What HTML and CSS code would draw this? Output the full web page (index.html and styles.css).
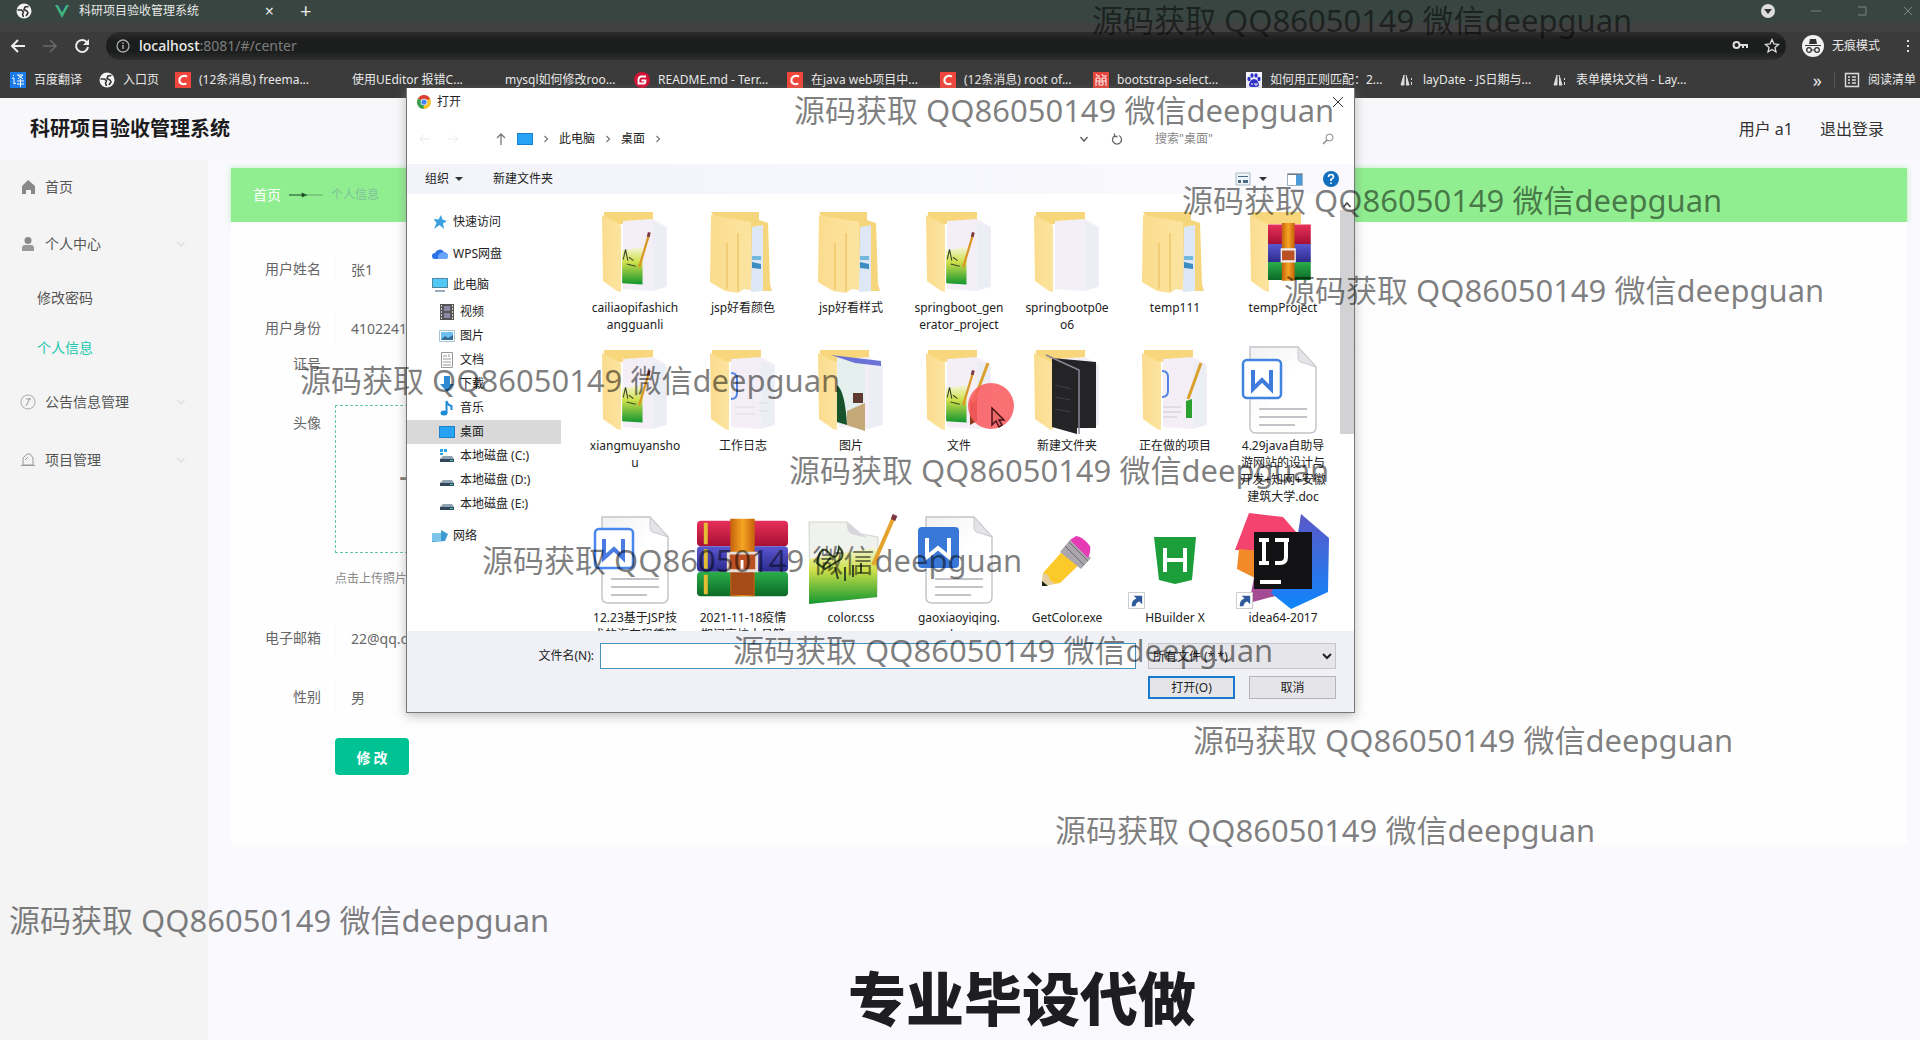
FILE: index.html
```html
<!DOCTYPE html>
<html lang="zh-CN">
<head>
<meta charset="utf-8">
<title>科研项目验收管理系统</title>
<link rel="stylesheet" href="styles.css">
</head>
<body>
<svg class="defs" aria-hidden="true">
  <defs>
    <linearGradient id="gold" x1="0" x2="1"><stop offset="0" stop-color="#fbdc8e"/><stop offset="1" stop-color="#fbe4a0"/></linearGradient>
    <linearGradient id="grass" x1="0" y1="0" x2="0" y2="1"><stop offset="0" stop-color="#f4f6d8"/><stop offset=".4" stop-color="#cfe04a"/><stop offset="1" stop-color="#12962f"/></linearGradient>
    <linearGradient id="page" x1="0" y1="0" x2="1" y2="1"><stop offset="0" stop-color="#f1f1f3"/><stop offset=".5" stop-color="#fff"/></linearGradient>
    <linearGradient id="strap" x1="0" x2="1"><stop offset="0" stop-color="#c4610c"/><stop offset=".5" stop-color="#f6a524"/><stop offset="1" stop-color="#c4610c"/></linearGradient>
    <linearGradient id="red" x1="0" y1="0" x2="0" y2="1"><stop offset="0" stop-color="#e8305a"/><stop offset="1" stop-color="#a80f34"/></linearGradient>
    <linearGradient id="blue" x1="0" y1="0" x2="0" y2="1"><stop offset="0" stop-color="#5a58d0"/><stop offset="1" stop-color="#2c2a8c"/></linearGradient>
    <linearGradient id="green" x1="0" y1="0" x2="0" y2="1"><stop offset="0" stop-color="#2cae4c"/><stop offset="1" stop-color="#0b6a26"/></linearGradient>
    <linearGradient id="ijblue" x1="0" y1="0" x2="0" y2="1"><stop offset="0" stop-color="#5b57c8"/><stop offset="1" stop-color="#0f86fb"/></linearGradient>
    <symbol id="globe" viewBox="0 0 16 16"><circle cx="8" cy="8" r="7.500" fill="#f4f4f4"/><path d="M1.500 7h4l2 2-1 2 1 3M12.500 3.500L9 4 8 6.500l3 1.500 1 2-2 3" fill="none" stroke="#333" stroke-width="1.600"/></symbol>
    <symbol id="csdn" viewBox="0 0 16 16"><path d="M0 0h16v16H0z" fill="#f1463b"/><path d="M12 4.600C9 3 4.800 4 4.400 8c-.3 4 4 5 7 3.400" fill="none" stroke="#fff" stroke-width="2"/></symbol>
    <symbol id="lay" viewBox="0 0 16 16"><path d="M5 3v10H2zM7 3l3 10H7M12.500 6v2M12.500 10v3" fill="#ddd" stroke="#ddd"/></symbol>
    <symbol id="folder-open" viewBox="0 0 96 96"><path d="M17 9h49v12H17z" fill="#f7d67c"/><path d="M36 18l30-2 14 8v60l-16 4-28-2z" fill="#f4eff7"/><path d="M66 20v68l13-5V24z" fill="#eceef6"/></symbol>
    <symbol id="flap" viewBox="0 0 96 96"><path d="M15 12l19 10v67l-4-1-14-10z" fill="url(#gold)"/></symbol>
    <symbol id="folder-shut" viewBox="0 0 96 96"><path d="M16 9h48v8l9 3 2 61 2 7H62z" fill="#f5d67c"/><path d="M57 24l11-2v66l-12 1z" fill="#dde7f5"/><path d="M57 53h9v4h-9z" fill="#74b9dd"/><path d="M57 59l9 2v5l-9-1z" fill="#3d8dc1"/><path d="M16 12l40 7v68l-7-1-6 4-13-2-15-9z" fill="url(#gold)"/><path d="M32 40v46M43 30v58" stroke="#f3cd76" stroke-width="2"/></symbol>
    <symbol id="art" viewBox="0 0 30 48"><path d="M1 16l18-3v33L1 45z" fill="url(#grass)"/><path d="M2 24l2-9 2 10M5 28l8 2M7 22l4 3" stroke="#3c4b26" fill="none"/><path d="M25 1l-9 30" stroke="#d99727" stroke-width="2"/><path d="M25 0l-1 4" stroke="#7b3a44" stroke-width="2.500"/></symbol>
    <symbol id="doc" viewBox="0 0 96 96"><path d="M15 6h48l18 20v60q0 6-6 6H21q-6 0-6-6z" fill="url(#page)" stroke="#c3c3c8" stroke-width="1.400"/><path d="M63 6v10q0 6 6 6l12 4z" fill="#e3e3e8" stroke="#c9c9ce"/><path d="M24 68h48M24 76h48M24 84h36" stroke="#c5c3ca" stroke-width="2"/></symbol>
    <symbol id="books" viewBox="0 0 96 80"><rect x="1" y="2" width="93" height="26" rx="4" fill="url(#red)"/><rect x="1" y="28" width="93" height="26" rx="4" fill="url(#blue)"/><rect x="1" y="54" width="93" height="25" rx="4" fill="url(#green)"/><path d="M10 4v22M10 31v20M10 57v20" stroke="#e4bd34" stroke-width="4"/><path d="M35 0h25v79H35z" fill="url(#strap)"/><path d="M36 53h23v25H36z" fill="#a44b17"/><path d="M33 35h29v18H33z" fill="#b95124" stroke="#e9dfd8" stroke-width="3"/><path d="M47 42v9" stroke="#fff" stroke-width="3"/></symbol>
    <symbol id="shortcut" viewBox="0 0 18 18"><path d="M.5.5h17v17H.5z" fill="#fff" stroke="#c9c9c9"/><path d="M4 15c0-5 2-7 5-8L6 4h9v9l-3-3c-3 1-4 3-4 5z" fill="#2f5a9c"/></symbol>
    <symbol id="disk" viewBox="0 0 16 16"><path d="M1 11l3-3h9l2 3z" fill="#8fa3b5"/><path d="M1 11h14v3H1z" fill="#34465c"/><path d="M11 12h3v1h-3z" fill="#3fd0a5"/></symbol>
    <symbol id="screen" viewBox="0 0 16 16"><path d="M0 2h16v12H0z" fill="#1b80d0"/><path d="M1 3h14v10H1z" fill="#27a3f5"/></symbol>
    <symbol id="chev" viewBox="0 0 10 10"><path d="M3.500 2l3 3-3 3" fill="none" stroke="#777" stroke-width="1.200"/></symbol>
    <symbol id="down" viewBox="0 0 10 10"><path d="M1.500 3L5 7l3.500-4" fill="none" stroke="currentColor" stroke-width="1.500"/></symbol>
  </defs>
</svg>

<header class="browser">
  <div class="tabs">
    <svg class="i16"><use href="#globe"/></svg>
    <div class="tab">
      <svg class="i16" viewBox="0 0 16 16"><path d="M1 2h3l4 7 4-7h3L8 15z" fill="#3fb27f"/><path d="M4 2h3l1 2 1-2h3L8 9z" fill="#2f4858"/></svg>
      <span class="tab-title">科研项目验收管理系统</span>
      <button class="bare" aria-label="关闭标签页">×</button>
    </div>
    <button class="bare plus" aria-label="新标签页">+</button>
    <div class="window-buttons">
      <svg class="i16" viewBox="0 0 16 16"><circle cx="8" cy="8" r="7" fill="#ddd"/><path d="M4 6h8l-4 5z" fill="#333"/></svg>
      <button class="bare" aria-label="最小化"><svg class="i12" viewBox="0 0 12 12"><path d="M1 6h10" stroke="#788"/></svg></button>
      <button class="bare" aria-label="还原"><svg class="i12" viewBox="0 0 12 12"><path d="M2 2h8v8H2" fill="none" stroke="#788"/></svg></button>
      <button class="bare" aria-label="关闭"><svg class="i12" viewBox="0 0 12 12"><path d="M2 2l8 8M10 2l-8 8" stroke="#788"/></svg></button>
    </div>
  </div>
  <div class="toolbar">
    <button class="bare" aria-label="后退"><svg class="i16" viewBox="0 0 16 16"><path d="M15 8H2M8 2L2 8l6 6" fill="none" stroke="#eee" stroke-width="2"/></svg></button>
    <button class="bare" aria-label="前进"><svg class="i16" viewBox="0 0 16 16"><path d="M1 8h13M8 2l6 6-6 6" fill="none" stroke="#6a6a6a" stroke-width="1.500"/></svg></button>
    <button class="bare" aria-label="刷新"><svg class="i16" viewBox="0 0 16 16"><path d="M13 4.500A6 6 0 1 0 14 9" fill="none" stroke="#eee" stroke-width="2"/><path d="M15 1v6H9z" fill="#eee"/></svg></button>
    <div class="address">
      <svg class="i16" viewBox="0 0 16 16"><circle cx="8" cy="8" r="6" fill="none" stroke="#aaa" stroke-width="1.300"/><path d="M8 7v4M8 4.500V6" stroke="#aaa" stroke-width="1.500"/></svg>
      <span class="url"><b>localhost</b>:8081/#/center</span>
      <svg class="i16 push" viewBox="0 0 16 16"><circle cx="4.500" cy="7" r="3" fill="none" stroke="#ddd" stroke-width="2"/><path d="M7 7h8v3M11 7v3" fill="none" stroke="#ddd" stroke-width="2"/></svg>
      <svg class="i16" viewBox="0 0 16 16"><path d="M8 1.500l2 4.500 4.500.4L11 9.500l1 4.500-4-2.500L4 14l1-4.500L1.500 6.400 6 6z" fill="none" stroke="#ddd" stroke-width="1.300"/></svg>
    </div>
    <div class="incognito">
      <svg class="i22" viewBox="0 0 22 22"><circle cx="11" cy="11" r="11" fill="#f2f2f2"/><path d="M7 9l1-5h6l1 5zM3 10h16v1H3z" fill="#333"/><path d="M9 15h4" stroke="#333"/><circle cx="7" cy="15" r="2.300" fill="none" stroke="#333" stroke-width="1.300"/><circle cx="15" cy="15" r="2.300" fill="none" stroke="#333" stroke-width="1.300"/></svg>
      <span>无痕模式</span>
    </div>
    <button class="bare" aria-label="菜单"><svg class="i16" viewBox="0 0 16 16"><path d="M7 2h2v2H7zM7 7h2v2H7zM7 12h2v2H7z" fill="#ddd"/></svg></button>
  </div>
  <nav class="bookmarks">
    <a href="#" class="short"><svg class="i16" viewBox="0 0 16 16"><path d="M0 0h16v16H0z" fill="#1b7be8"/><path d="M3 3l1 1M2 6h2v6l2-1M7 3h6l-5 4M8 3l5 4M7 9h7M7 12h7M10.500 7v8" stroke="#fff" fill="none"/></svg><span>百度翻译</span></a>
    <a href="#" class="shorter"><svg class="i16"><use href="#globe"/></svg><span>入口页</span></a>
    <a href="#"><svg class="i16"><use href="#csdn"/></svg><span>(12条消息) freema...</span></a>
    <a href="#"><svg class="i16"></svg><span>使用UEditor 报错C...</span></a>
    <a href="#"><svg class="i16"></svg><span>mysql如何修改roo...</span></a>
    <a href="#"><svg class="i16" viewBox="0 0 16 16"><circle cx="8" cy="8" r="8" fill="#d21436"/><path d="M12 4.500H7Q4.500 5 4.500 8v3.500h5.500q1.500 0 1.500-3H7.500" fill="none" stroke="#fff" stroke-width="1.800"/></svg><span>README.md - Terr...</span></a>
    <a href="#"><svg class="i16"><use href="#csdn"/></svg><span>在java web项目中...</span></a>
    <a href="#"><svg class="i16"><use href="#csdn"/></svg><span>(12条消息) root of...</span></a>
    <a href="#"><svg class="i16" viewBox="0 0 16 16"><path d="M0 0h16v16H0z" fill="#e5463c"/><path d="M3 2l1 2h3M9 2l1 2h4M3 14V6h4v3H3M13 14V6H9v3h4M6 10h4v3H6z" stroke="#fff" fill="none"/></svg><span>bootstrap-select...</span></a>
    <a href="#"><svg class="i16" viewBox="0 0 16 16"><path d="M0 0h16v16H0z" fill="#f4f4ff"/><g fill="#2f31c9"><ellipse cx="3" cy="7" rx="1.600" ry="2.200"/><ellipse cx="6" cy="3.500" rx="1.600" ry="2.300"/><ellipse cx="10" cy="3.500" rx="1.600" ry="2.300"/><ellipse cx="13" cy="7" rx="1.600" ry="2.200"/><path d="M8 7c3 0 5 4 5 6s-2 2-5 2-5 0-5-2 2-6 5-6z"/></g><path d="M6 11v2M9 11v2h2v-2" stroke="#fff" fill="none"/></svg><span>如何用正则匹配：2...</span></a>
    <a href="#"><svg class="i16"><use href="#lay"/></svg><span>layDate - JS日期与...</span></a>
    <a href="#"><svg class="i16"><use href="#lay"/></svg><span>表单模块文档 - Lay...</span></a>
    <button class="bare push" aria-label="更多书签">»</button>
    <a href="#" class="reading"><svg class="i16" viewBox="0 0 16 16"><path d="M1.500 1.500h13v13h-13zM4 5h2M8 5h4M4 8h2M8 8h4M4 11h2M8 11h4" fill="none" stroke="#ddd" stroke-width="1.400"/></svg><span>阅读清单</span></a>
  </nav>
</header>

<div class="app">
  <header class="app-head">
    <h1>科研项目验收管理系统</h1>
    <span class="user">用户 a1</span>
    <a href="#">退出登录</a>
  </header>
  <nav class="side">
    <a href="#" class="top"><svg class="i16" viewBox="0 0 16 16"><path d="M8 1l7 6v8h-4v-4H6v4H2V7z" fill="#888"/></svg>首页</a>
    <a href="#" class="top"><svg class="i16" viewBox="0 0 16 16"><circle cx="8" cy="4.500" r="3.500" fill="#888"/><path d="M2 15v-3q0-3 3-3h6q3 0 3 3v3z" fill="#999"/></svg>个人中心<svg class="i10 fold"><use href="#down"/></svg></a>
    <a href="#" class="sub">修改密码</a>
    <a href="#" class="sub on">个人信息</a>
    <a href="#" class="top"><svg class="i16" viewBox="0 0 16 16"><circle cx="8" cy="8" r="7" fill="none" stroke="#aaa"/><path d="M10 4l-4 8M6 5h5" stroke="#999" fill="none"/></svg>公告信息管理<svg class="i10 fold"><use href="#down"/></svg></a>
    <a href="#" class="top"><svg class="i16" viewBox="0 0 16 16"><path d="M3 13V6l4-4h3l3 4v7zM1 13.500h14M5 8l3-3" fill="none" stroke="#999"/></svg>项目管理<svg class="i10 fold"><use href="#down"/></svg></a>
  </nav>
  <main>
    <div class="crumbs"><a href="#">首页</a><svg class="line" viewBox="0 0 34 8"><path d="M0 4h34" stroke="#6aa86c"/><path d="M0 4h18M13 2v4l4-2z" stroke="#2d6b35"/></svg><span>个人信息</span></div>
    <form class="card">
      <div class="row"><label for="name">用户姓名</label><input id="name" value="张1"></div>
      <div class="row"><label for="idno">用户身份证号</label><input id="idno" value="4102241"></div>
      <div class="row"><label for="photo">头像</label><div><button id="photo" type="button" class="upload">+</button><p class="hint">点击上传照片</p></div></div>
      <div class="row"><label for="mail">电子邮箱</label><input id="mail" value="22@qq.com"></div>
      <div class="row"><label for="sex">性别</label><input id="sex" value="男"></div>
      <button type="button" class="save">修 改</button>
    </form>
  </main>
</div>

<section class="dialog" role="dialog" aria-label="打开">
  <div class="d-title">
    <svg class="i14" viewBox="0 0 16 16"><circle cx="8" cy="8" r="8" fill="#f4c52e"/><path d="M8 8L1.100 4A8 8 0 0 1 15 4z" fill="#dc4437"/><path d="M8 8L1.100 4A8 8 0 0 0 7.500 16z" fill="#35a154"/><circle cx="8" cy="8" r="3.800" fill="#fff"/><circle cx="8" cy="8" r="3" fill="#4284f3"/></svg>
    <span>打开</span>
    <button class="bare push" aria-label="关闭"><svg class="i12" viewBox="0 0 12 12"><path d="M1 1l10 10M11 1L1 11" stroke="#333"/></svg></button>
  </div>
  <div class="d-path">
    <svg class="i12" viewBox="0 0 12 12"><path d="M11 6H1l4-4M1 6l4 4" fill="none" stroke="#e8e8ec"/></svg>
    <svg class="i12" viewBox="0 0 12 12"><path d="M1 6h10L7 2m4 4l-4 4" fill="none" stroke="#ececf0"/></svg>
    <svg class="i12 up" viewBox="0 0 12 12"><path d="M6 12V1M2 5l4-4 4 4" fill="none" stroke="#777" stroke-width="1.300"/></svg>
    <svg class="i16"><use href="#screen"/></svg>
    <svg class="i10"><use href="#chev"/></svg><span>此电脑</span><svg class="i10"><use href="#chev"/></svg><span>桌面</span><svg class="i10"><use href="#chev"/></svg>
    <svg class="i10 push"><use href="#down"/></svg>
    <svg class="i12" viewBox="0 0 12 12"><path d="M8 2.500A4.500 4.500 0 1 1 4 2.500M3.500.5v3h3" fill="none" stroke="#666" stroke-width="1.300"/></svg>
    <input class="search" aria-label="搜索" placeholder='搜索"桌面"'>
    <svg class="i12" viewBox="0 0 12 12"><circle cx="7.500" cy="4.500" r="3.500" fill="none" stroke="#888"/><path d="M5 7l-4 4" stroke="#888" stroke-width="1.500"/></svg>
  </div>
  <div class="d-tools">
    <button class="bare">组织<i class="caret"></i></button>
    <button class="bare new">新建文件夹</button>
    <button class="bare push" aria-label="视图"><svg class="i16" viewBox="0 0 16 16"><path d="M1 2h14v12H1z" fill="#eef4f8" stroke="#a9b9c6"/><path d="M3 5h10v1H3zM3 9h3v3H3zM8 9h5v3H8z" fill="#496c84"/></svg><i class="caret"></i></button>
    <button class="bare" aria-label="预览窗格"><svg class="i16" viewBox="0 0 16 16"><path d="M.5 2.500h15v12H.5z" fill="#fff" stroke="#9db0c0"/><path d="M9 4h6v10H9z" fill="#4a9bdc"/><path d="M1 3h14v1H1z" fill="#778"/></svg></button>
    <button class="bare" aria-label="帮助"><svg class="i16" viewBox="0 0 16 16"><circle cx="8" cy="8" r="8" fill="#0f6ebd"/><path d="M5.500 6q0-2.500 2.500-2.500T10.500 6Q10.500 7 8 8.500V10M8 11.500v1.500" fill="none" stroke="#fff" stroke-width="1.700"/></svg></button>
  </div>
  <div class="d-body">
    <nav class="tree">
      <a href="#"><svg class="i16" viewBox="0 0 16 16"><path d="M9 1l1.500 4.500L15 7l-4 2.500 1 5.500-4.500-4L2 15l2.500-6-3-4 5 .5z" fill="#3b9fe0"/></svg>快速访问</a>
      <a href="#"><svg class="i16" viewBox="0 0 16 16"><path d="M3 13a3 3 0 0 1 0-6 5 5 0 0 1 9-1q4 1 4 4t-3 3z" fill="#2c72e6"/><path d="M6 13q-1-6 6-7 4 1 4 4t-3 3z" fill="#69a5fa"/></svg>WPS网盘</a>
      <a href="#" class="pc"><svg class="i16" viewBox="0 0 16 16"><path d="M0 1h16v10H0z" fill="#4f86a4"/><path d="M1 2h14v8H1z" fill="#54c8f5"/><path d="M3 13h10v2H3z" fill="#9ab"/></svg>此电脑</a>
      <a href="#" class="in"><svg class="i16" viewBox="0 0 16 16"><path d="M1 0h14v16H1z" fill="#555"/><path d="M5 2h6v5H5zM5 9h6v5H5z" fill="#8d8aa8"/><path d="M2.500 1v14M13.500 1v14" stroke="#ccc" stroke-dasharray="2 1"/></svg>视频</a>
      <a href="#" class="in"><svg class="i16" viewBox="0 0 16 16"><path d="M.5 2.500h15v11H.5z" fill="#fff" stroke="#a9c0cf"/><path d="M2 4h12v8H2z" fill="#70bdf0"/><path d="M2 12l4-4 3 2 5-3v5z" fill="#326b95"/></svg>图片</a>
      <a href="#" class="in"><svg class="i16" viewBox="0 0 16 16"><path d="M2.500.5h11v15h-11zM4 4h4M4 7h8M4 10h8M4 13h8M10 2v3" fill="#fff" stroke="#999"/></svg>文档</a>
      <a href="#" class="in"><svg class="i16" viewBox="0 0 16 16"><path d="M5 0h6v8h4l-7 8-7-8h4z" fill="#2e8ad2"/></svg>下载</a>
      <a href="#" class="in"><svg class="i16" viewBox="0 0 16 16"><ellipse cx="5" cy="13" rx="3.500" ry="2.500" fill="#1f8bd6"/><path d="M7.500 13V1q1 4 5 5v4" fill="none" stroke="#1f8bd6" stroke-width="2"/></svg>音乐</a>
      <a href="#" class="in on"><svg class="i16"><use href="#screen"/></svg>桌面</a>
      <a href="#" class="in"><svg class="i16" viewBox="0 0 16 16"><use href="#disk"/><path d="M1 1h3v3H1zM5 1h3v3H5zM1 5h3v2H1z" fill="#27a9e8"/></svg>本地磁盘 (C:)</a>
      <a href="#" class="in"><svg class="i16"><use href="#disk"/></svg>本地磁盘 (D:)</a>
      <a href="#" class="in"><svg class="i16"><use href="#disk"/></svg>本地磁盘 (E:)</a>
      <a href="#" class="net"><svg class="i16" viewBox="0 0 16 16"><path d="M0 5h9V2l7 4-3 7-13 1z" fill="#3c9bd2"/><path d="M0 5h9v8H0z" fill="#7cc4ea"/></svg>网络</a>
    </nav>
    <ul class="files">
      <li><svg viewBox="0 0 96 96"><use href="#folder-open"/><use href="#art" x="34" y="28" width="34" height="57"/><use href="#flap"/></svg><span>cailiaopifashich<br>angguanli</span></li>
      <li><svg viewBox="0 0 96 96"><use href="#folder-shut"/></svg><span>jsp好看颜色</span></li>
      <li><svg viewBox="0 0 96 96"><use href="#folder-shut"/></svg><span>jsp好看样式</span></li>
      <li><svg viewBox="0 0 96 96"><use href="#folder-open"/><use href="#art" x="34" y="28" width="34" height="57"/><use href="#flap"/></svg><span>springboot_gen<br>erator_project</span></li>
      <li><svg viewBox="0 0 96 96"><use href="#folder-open"/><use href="#flap"/></svg><span>springbootp0e<br>o6</span></li>
      <li><svg viewBox="0 0 96 96"><use href="#folder-shut"/></svg><span>temp111</span></li>
      <li><svg viewBox="0 0 96 96"><path d="M17 9h49v12H17z" fill="#f7d67c"/><use href="#flap"/><g transform="translate(33 20) scale(.46 .75)"><path d="M0 2h93v26H0z" fill="url(#red)"/><path d="M0 28h93v24H0z" fill="url(#blue)"/><path d="M0 52h93v24H0z" fill="url(#green)"/><path d="M30 0h28v77H30z" fill="url(#strap)"/><path d="M29 35h30v16H29z" fill="#b95124" stroke="#eee" stroke-width="3"/></g></svg><span>tempProject</span></li>
      <li><svg viewBox="0 0 96 96"><use href="#folder-open"/><use href="#art" x="34" y="28" width="34" height="57"/><use href="#flap"/></svg><span>xiangmuyansho<br>u</span></li>
      <li><svg viewBox="0 0 96 96"><use href="#folder-open"/><path d="M36 32q6 0 6 6v14q0 6-6 6" fill="none" stroke="#5383e6" stroke-width="2"/><path d="M40 66h20M40 73h20M64 62h10M64 70h10" stroke="#ddd"/><use href="#flap"/></svg><span>工作日志</span></li>
      <li><svg viewBox="0 0 96 96"><use href="#folder-open"/><path d="M34 16l28 6v68l-28-8z" fill="#e5f0ee"/><path d="M34 44q8 6 10 40l-10-3z" fill="#17522a"/><path d="M44 70l18-8v28l-18-6z" fill="#c5a878"/><path d="M50 52h10v10H50z" fill="#5e3a30"/><use href="#flap"/><path d="M28 14l24 8 26 3v-5z" fill="#6a72d6"/></svg><span>图片</span></li>
      <li><svg viewBox="0 0 96 96"><use href="#folder-open"/><use href="#art" x="34" y="28" width="34" height="57"/><path d="M59 60l7-4v24l-7 4z" fill="#8d3a1c"/><path d="M77 22L62 62" stroke="#d9a02c" stroke-width="3"/><use href="#flap"/></svg><span>文件</span></li>
      <li><svg viewBox="0 0 96 96"><use href="#folder-open"/><use href="#flap"/><path d="M33 17l44 4v66H58V93L33 86z" fill="#242427"/><path d="M27 14l33 15v64" fill="none" stroke="#8d8496" stroke-width="1.500"/><path d="M36 44l16 4M36 56l16 3M36 68l16 3" stroke="#3f3f43"/></svg><span>新建文件夹</span></li>
      <li><svg viewBox="0 0 96 96"><use href="#folder-open"/><path d="M35 30q6 0 6 6v14q0 6-6 6" fill="none" stroke="#5383e6" stroke-width="2"/><path d="M36 66h18M36 71h18M36 76h14" stroke="#c9c9d0"/><path d="M59 60l6-2v19h-6z" fill="#2aa12f"/><path d="M74 22L61 58" stroke="#d9a02c" stroke-width="3"/><use href="#flap"/></svg><span>正在做的项目</span></li>
      <li><svg viewBox="0 0 96 96"><use href="#doc"/><rect x="8" y="19" width="38" height="38" rx="4" fill="#fff" stroke="#3f85e0" stroke-width="2.500"/><path d="M18 29v19l9-9 9 9V29" fill="none" stroke="#3f7bdc" stroke-width="4"/></svg><span>4.29java自助导<br>游网站的设计与<br>开发+知网+安徽<br>建筑大学.doc</span></li>
      <li><svg viewBox="0 0 96 96"><use href="#doc" y="-2"/><rect x="8" y="16" width="38" height="39" rx="4" fill="#fff" stroke="#4a86ee" stroke-width="2.500"/><path d="M17 26v19l10-9 9 9V26" fill="none" stroke="#4a7ae2" stroke-width="4"/></svg><span>12.23基于JSP技<br>术的汽车租赁管</span></li>
      <li><svg viewBox="0 0 96 96"><use href="#books" x="1" y="5" width="94" height="80"/></svg><span>2021-11-18疫情<br>期间高校人员管</span></li>
      <li><svg viewBox="0 0 96 96"><path d="M6 9h38l14 12 17 3-1 60-67 6z" fill="#f0f2ee" stroke="#d2d4d0"/><path d="M6 46l68-12v50L6 91z" fill="url(#grass)"/><path d="M44 9q-1 10 5 12l15 4z" fill="#d6d6dc"/><path d="M14 50q4-20 12-10t10-6q6 6 2 12l-16 10zM20 54l8-10M32 54l3 12M42 54v14M50 52v12M58 50v10" fill="none" stroke="#354a24" stroke-width="2"/><path d="M90 6L70 52" stroke="#e4a32c" stroke-width="4"/><path d="M92 2l-2 5" stroke="#7c3542" stroke-width="5"/></svg><span>color.css</span></li>
      <li><svg viewBox="0 0 96 96"><use href="#doc" y="-2"/><rect x="7" y="14" width="41" height="41" rx="4" fill="#3a78d8"/><path d="M16 25v19l11-9 11 9V25" fill="none" stroke="#fff" stroke-width="4"/></svg><span>gaoxiaoyiqing.<br>docx</span></li>
      <li><svg viewBox="0 0 96 96"><path d="M23 73l1-13 24-27 16 15-23 22z" fill="#fcc92a"/><path d="M23 73l1-13 5 2 2 5 5 4z" fill="#e7cfa4"/><path d="M23 73v-5l6 5z" fill="#221"/><path d="M41 39l10-12 21 18-10 11z" fill="#a9a6ae"/><path d="M46 33l19 19M50 29l19 19" stroke="#6e6a75"/><path d="M51 27l6-4q6 0 14 10 1 6-2 12z" fill="#e63bb4"/></svg><span>GetColor.exe</span></li>
      <li><svg viewBox="0 0 96 96"><path d="M27 24h42l-4 43-17 4-16-4z" fill="#1c9e3a"/><path d="M38 35v24M58 35v24M38 47h20" stroke="#fff" stroke-width="4"/><use href="#shortcut" x="1" y="79" width="17" height="17"/></svg><span>HBuilder X</span></li>
      <li><svg viewBox="0 0 96 96"><path d="M14 0l34 4 14 16-36 18L0 37z" fill="#f4436f"/><path d="M4 36l22 2-4 28L2 56z" fill="#f28a2a"/><path d="M20 60h32l-8 22-30 8z" fill="#a34b93"/><path d="M66 1l28 24-1 54-37 17-20-16 24-40z" fill="url(#ijblue)"/><path d="M19 19h58v57H19z" fill="#121214"/><path d="M25 69h21" stroke="#fff" stroke-width="4"/><path d="M24 27h10M29 27v23M24 50h10M40 27h14M51 27v17q0 6-6 6h-5" fill="none" stroke="#fff" stroke-width="4"/><use href="#shortcut" x="1" y="79" width="17" height="17"/></svg><span>idea64-2017</span></li>
    </ul>
    <div class="scroll">
      <svg class="i10 flip"><use href="#down"/></svg><i></i><svg class="i10"><use href="#down"/></svg>
    </div>
  </div>
  <div class="d-foot">
    <label for="fname">文件名(N):</label>
    <input id="fname">
    <select aria-label="文件类型"><option>所有文件 (*.*)</option></select>
    <div class="actions"><button class="open">打开(O)</button><button class="cancel">取消</button></div>
  </div>
</section>

<div class="pointer"><svg viewBox="0 0 46 46"><circle cx="23" cy="23" r="23" fill="#fb5c60" fill-opacity=".88"/><path d="M24 25v17l4-4 3 6 3-2-3-5h5z" fill="#e96868" stroke="#4a1518" stroke-width="1.500"/></svg></div>

<ul class="marks" aria-hidden="true">
  <li>源码获取 QQ86050149 微信deepguan</li>
  <li>源码获取 QQ86050149 微信deepguan</li>
  <li>源码获取 QQ86050149 微信deepguan</li>
  <li>源码获取 QQ86050149 微信deepguan</li>
  <li>源码获取 QQ86050149 微信deepguan</li>
  <li>源码获取 QQ86050149 微信deepguan</li>
  <li>源码获取 QQ86050149 微信deepguan</li>
  <li>源码获取 QQ86050149 微信deepguan</li>
  <li>源码获取 QQ86050149 微信deepguan</li>
  <li>源码获取 QQ86050149 微信deepguan</li>
  <li>源码获取 QQ86050149 微信deepguan</li>
</ul>
<p class="caption">专业毕设代做</p>
</body>
</html>
```
FILE: styles.css
```css
* { box-sizing: border-box; }
body {
  margin: 0;
  min-height: 100vh;
  display: flex;
  flex-direction: column;
  position: relative;
  overflow: hidden;
  background: #f9f9fe;
  color: #333;
  font: 12px/16px "Noto Sans", "Noto Sans CJK SC", sans-serif;
}
a { color: inherit; text-decoration: none; }
ul, p, h1 { margin: 0; padding: 0; list-style: none; }
svg { flex: none; display: block; }
.defs { position: absolute; width: 0; height: 0; }
.i10 { width: 10px; height: 10px; }
.i12 { width: 12px; height: 12px; }
.i14 { width: 14px; height: 14px; }
.i16 { width: 16px; height: 16px; }
.i22 { width: 22px; height: 22px; }
.push { margin-left: auto; }
.bare {
  display: flex;
  align-items: center;
  padding: 0;
  border: 0;
  background: none;
  color: inherit;
  font: inherit;
}
.caret { margin-left: 6px; border: 4px solid transparent; border-top-color: #333; border-bottom: 0; }

/* browser */
.browser { background: #3b3b3b; color: #e8e8e8; }
.tabs {
  display: flex;
  align-items: center;
  height: 32px;
  padding: 0 6px 10px 16px;
  background: linear-gradient(#384540 0 22px, #414141 24px);
}
.tab { display: flex; align-items: center; width: 220px; margin-left: 22px; }
.tab-title { margin-left: 9px; }
.tab .bare { margin-left: auto; font-size: 16px; }
.plus { margin-left: 26px; font-size: 20px; }
.window-buttons { display: flex; gap: 34px; margin-left: auto; }
.toolbar {
  display: flex;
  align-items: center;
  gap: 16px;
  height: 28px;
  padding: 0 4px 0 10px;
}
.address {
  flex: 1;
  display: flex;
  align-items: center;
  gap: 16px;
  height: 28px;
  padding: 0 6px 0 9px;
  border-radius: 14px;
  background: linear-gradient(#2c2c2c, #1c1e1d 30%, #1c1e1d 70%, #2e2e2e);
}
.url { margin-left: -8px; color: #7d7d7d; font-size: 14px; }
.url b { color: #eee; font-weight: 500; }
.incognito { display: flex; align-items: center; gap: 8px; margin-right: 4px; }
.bookmarks { display: flex; align-items: center; height: 38px; padding: 2px 4px 0 10px; }
.bookmarks a { display: flex; align-items: center; gap: 8px; width: 153px; white-space: nowrap; }
.bookmarks .short { width: 89px; }
.bookmarks .shorter { width: 76px; }
.bookmarks .bare { margin-right: 12px; font-size: 18px; }
.bookmarks .reading { width: auto; padding-left: 9px; border-left: 1px solid #555; }

/* application */
.app {
  flex: 1;
  display: grid;
  grid-template-columns: 208px 1fr;
  grid-template-rows: 62px 1fr;
}
.app-head {
  grid-column: 1 / 3;
  display: flex;
  align-items: center;
  gap: 27px;
  padding: 0 36px 0 30px;
  background: #f8f8fb;
  font-size: 16px;
}
.app-head h1 { margin-right: auto; color: #1c1c20; font-size: 20px; }
.side { padding-top: 4px; background: #f4f4f4; font-size: 14px; color: #555; }
.side a { display: flex; align-items: center; }
.side .top { gap: 9px; height: 58px; padding: 0 22px 0 20px; }
.side .top:first-child { height: 46px; margin-bottom: 5px; }
.side .sub { height: 50px; padding-left: 37px; }
.side .on { color: #20c8ac; }
.fold { margin-left: auto; color: #e0e0e4; }
main { padding: 8px 13px 0 23px; }
.crumbs {
  display: flex;
  align-items: center;
  gap: 8px;
  height: 54px;
  padding: 0 22px;
  background: #90ee90;
  box-shadow: 0 0 6px #b5efb7;
  color: #7fc09a;
  font-size: 14px;
}
.crumbs a { color: #fff; }
.crumbs span { font-size: 12px; }
.line { width: 34px; height: 8px; }
.card {
  display: flex;
  flex-direction: column;
  gap: 23px;
  padding: 29px 149px 70px 10px;
  background: #fefeff;
  font-size: 14px;
}
.row { display: flex; gap: 14px; }
.row label { width: 80px; padding-left: 22px; line-height: 36px; text-align: right; color: #666; }
.row input {
  flex: 1;
  height: 36px;
  padding: 0 15px;
  border: 1px solid #fbfbfd;
  background: #fefeff;
  color: #666;
  font: inherit;
}
.upload {
  display: block;
  width: 148px;
  height: 148px;
  border: 1px dashed #68c4ac;
  background: #fefeff;
  color: #777;
  font-size: 36px;
}
.hint { margin-top: 8px; line-height: 36px; font-size: 12px; color: #888; }
.save {
  width: 74px;
  height: 37px;
  margin-left: 94px;
  border: 0;
  border-radius: 4px;
  background: #00c292;
  color: #fff;
  font: bold 14px "Noto Sans CJK SC", sans-serif;
}

/* file dialog window */
.dialog {
  position: absolute;
  left: 406px;
  top: 88px;
  width: 949px;
  display: flex;
  flex-direction: column;
  border: 1px solid #777;
  border-top: 0;
  background: #fff;
  box-shadow: 0 3px 10px #8888;
  color: #222;
}
.d-title { display: flex; align-items: center; gap: 6px; height: 28px; padding: 0 10px; }
.d-path { display: flex; align-items: center; gap: 8px; height: 48px; padding: 0 20px 2px 12px; }
.d-path .i12 { margin-right: 8px; }
.d-path .up { margin: 0 2px 0 20px; }
.d-path .push { margin-right: 14px; color: #666; }
.search { width: 168px; margin: 0 -9px 0 16px; padding: 0; border: 0; outline: 0; font: inherit; }
.search::placeholder { color: #888; }
.d-path .i12:last-child { margin: 0; }
.d-tools { display: flex; align-items: center; gap: 20px; height: 30px; padding: 0 15px 0 18px; background: linear-gradient(90deg, #f2f4fa, #fafafe); }
.d-tools .new { margin-left: 10px; }
.d-tools .push .caret { margin-left: 8px; }
.d-body { display: grid; grid-template-columns: 154px 1fr 14px; height: 437px; overflow: hidden; }
.tree { padding-top: 12px; }
.tree a { display: flex; align-items: center; gap: 5px; height: 32px; padding-left: 25px; }
.tree .pc { height: 30px; }
.tree .in { height: 24px; padding-left: 32px; }
.tree .net { margin-top: 4px; }
.tree .on { background: #d9d9d9; }
.files {
  display: grid;
  grid-template-columns: repeat(7, 108px);
  align-content: start;
  row-gap: 8px;
  padding: 9px 0 0 20px;
  line-height: 17px;
  text-align: center;
}
.files svg { width: 96px; height: 96px; margin: 0 auto; }
.files span { display: block; white-space: nowrap; }
.scroll { display: flex; flex-direction: column; align-items: center; padding: 6px 0 2px; color: #444; }
.scroll i { width: 14px; height: 224px; margin-bottom: auto; background: #d2d2d4; }
.flip { transform: rotate(180deg); }
.d-foot {
  display: grid;
  grid-template-columns: 189px 1fr 188px;
  gap: 7px 0;
  padding: 12px 18px 13px 0;
  background: #f0f1f6;
}
.d-foot label { padding-right: 2px; line-height: 26px; text-align: right; }
.d-foot input, .d-foot select { height: 26px; margin: 0; font: inherit; color: inherit; }
.d-foot input { margin: 0 12px 0 4px; border: 1px solid #4793bd; background: #fff; }
.d-foot select { border: 1px solid #c6c6ca; background: #e6e6ea; }
.actions { grid-column: 3; display: flex; justify-content: space-between; }
.actions button { width: 87px; height: 23px; padding: 0; border: 1px solid #b5b5b9; background: #e5e5e9; font: inherit; color: inherit; }
.actions .open { border: 2px solid #1b78cf; }

/* overlays */
.pointer { position: absolute; left: 968px; top: 383px; width: 46px; }
.marks {
  position: absolute;
  left: 0;
  top: -25px;
  color: #00000080;
  font-size: 31px;
  line-height: 90px;
  white-space: nowrap;
  pointer-events: none;
}
.marks li { padding-left: 1092px; height: 90px; }
.marks li:nth-child(2) { padding-left: 794px; }
.marks li:nth-child(3) { padding-left: 1182px; }
.marks li:nth-child(4) { padding-left: 1284px; }
.marks li:nth-child(5) { padding-left: 300px; }
.marks li:nth-child(6) { padding-left: 789px; }
.marks li:nth-child(7) { padding-left: 482px; }
.marks li:nth-child(8) { padding-left: 733px; }
.marks li:nth-child(9) { padding-left: 1193px; }
.marks li:nth-child(10) { padding-left: 1055px; }
.marks li:nth-child(11) { padding-left: 9px; }
.caption {
  position: absolute;
  left: 848px;
  bottom: 8px;
  color: #1d1d22;
  font: 900 58px/72px "Noto Sans CJK SC", sans-serif;
  text-shadow: 0 0 3px #fff;
}
```
